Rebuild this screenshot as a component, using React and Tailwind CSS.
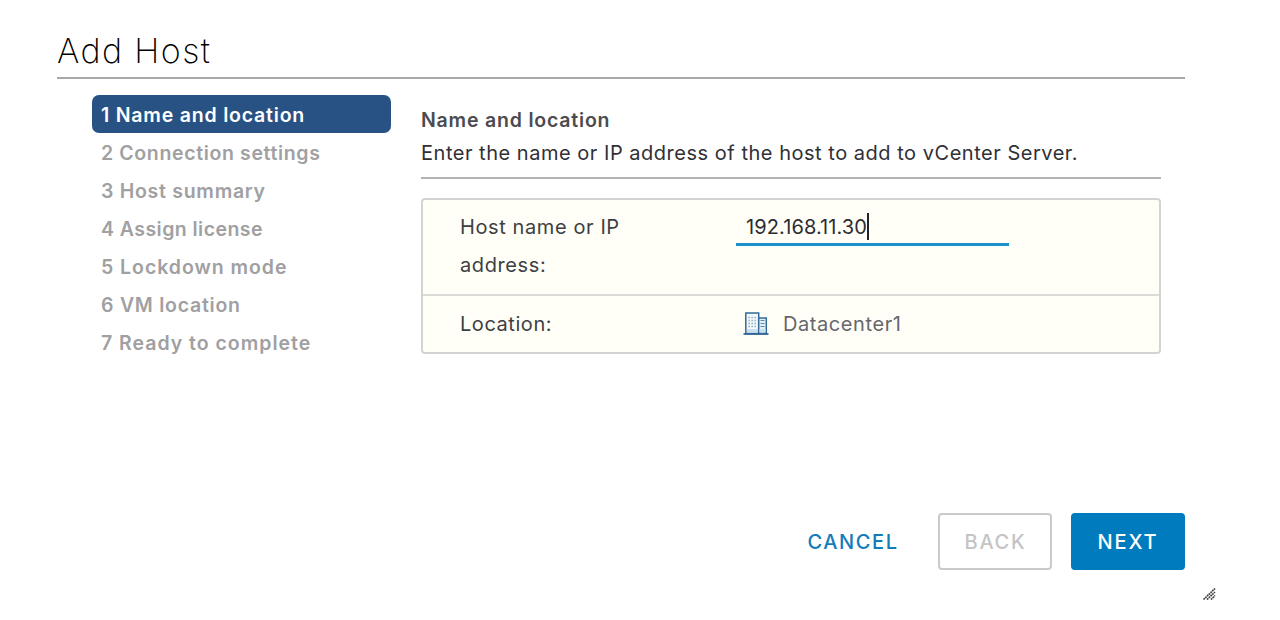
const STEPS = [
  { label: '1 Name and location', tracking: 'tracking-[0.8px]' },
  { label: '2 Connection settings', tracking: 'tracking-[0.64px]' },
  { label: '3 Host summary', tracking: 'tracking-[0.72px]' },
  { label: '4 Assign license', tracking: 'tracking-[0.45px]' },
  { label: '5 Lockdown mode', tracking: 'tracking-[0.95px]' },
  { label: '6 VM location', tracking: 'tracking-[0.75px]' },
  { label: '7 Ready to complete', tracking: 'tracking-[0.98px]' },
];

function DatacenterIcon() {
  return (
    <svg width="26" height="25" viewBox="0 0 26 25" className="shrink-0" fill="none">
      <rect x="2.8" y="1" width="12.9" height="20.5" fill="#f4f9fc" stroke="#336a96" strokeWidth="1.5" />
      <rect x="15.7" y="6" width="7.6" height="15.5" fill="#e3eff7" stroke="#336a96" strokeWidth="1.5" />
      <path d="M5.5 5.5h8M5.5 8.5h8M5.5 11.5h8M5.5 14.5h8" stroke="#7fa1b8" strokeWidth="1.3" strokeDasharray="1.3 1.7" />
      <path d="M17.5 8.5h4M17.5 11.5h4M17.5 14.5h4" stroke="#5e8db0" strokeWidth="1.2" />
      <path d="M4 18.5h11M16.5 18.5h6" stroke="#c9e0ee" strokeWidth="3" />
      <path d="M.5 22h25" stroke="#336a96" strokeWidth="1.8" />
    </svg>
  );
}

function ResizeGrip() {
  return (
    <svg width="13" height="12" viewBox="0 0 13 12" fill="none" stroke="#444" strokeWidth="1.7">
      <path d="M.5 11.5L12 .5M4 11.5L12 4M8 11.5L12 7.5" strokeDasharray="1.8 .6" />
    </svg>
  );
}

export default function App() {
  return (
    <main className="flex h-[620px] w-[1280px] flex-col overflow-hidden bg-white font-['Inter','Noto_Sans',sans-serif] text-[20px] whitespace-nowrap text-[#4b4b50]">
      <header className="mr-[95px] ml-[57px] flex h-[79px] items-end border-b-2 border-[#a8a8a8] pb-[6px]">
        <h1 className="text-[34px] leading-[40px] font-extralight tracking-[1.4px] text-black">Add Host</h1>
      </header>

      <div className="flex h-[434px] pt-[16px] pl-[92px]">
        <ol className="w-[299px] shrink-0 text-[19.5px] font-semibold text-[#a0a0a2]">
          {STEPS.map((step, i) => (
            <li
              key={step.label}
              className={`flex h-[38px] items-center rounded-[7px] pt-[3px] pl-[9px] ${i === 0 ? 'bg-[#285283] text-white' : ''}`}
            >
              <span className={step.tracking}>{step.label}</span>
            </li>
          ))}
        </ol>

        <section className="ml-[30px] w-[740px]">
          <h2 className="mt-[10px] text-[19.5px] leading-[30px] font-semibold tracking-[0.8px]">Name and location</h2>
          <p className="flex h-[44px] items-center border-b-2 border-[#b3b1b3] pb-[7px] text-[#303036]">
            <span className="tracking-[0.52px]">Enter the name or IP address of the host to add to vCenter Server.</span>
          </p>
          <div className="mt-[19px] rounded-[4px] border-2 border-[#d3d3d1] bg-[#fffff8]">
            <div className="flex h-[96px] border-b-2 border-[#dadad7] pt-[8px] pl-[37px]">
              <label htmlFor="host" className="w-[276px] leading-[38px] tracking-[0.6px] text-[#3e3e43]">
                <span>Host name or IP</span>
                <br />
                <span>address:</span>
              </label>
              <div id="host" className="flex h-[38px] w-[273px] items-center border-b-[3px] border-[#1b90cb] pt-[2px] pl-[10px] text-[#2c2c33]">
                <span className="tracking-[0.1px]">192.168.11.30</span>
                <span className="h-[27px] w-[2px] bg-[#222]" />
              </div>
            </div>
            <div className="flex h-[56px] items-center pl-[37px]">
              <span className="w-[283px] tracking-[0.55px] text-[#3e3e43]">Location:</span>
              <DatacenterIcon />
              <span className="ml-[14px] tracking-[0.58px] text-[#66666c]">Datacenter1</span>
            </div>
          </div>
        </section>
      </div>

      <footer className="flex h-[57px] justify-end pr-[95px] font-medium">
        <button className="mr-[20px] w-[131px] pl-px text-[#137bb9]"><span className="tracking-[1.6px]">CANCEL</span></button>
        <button className="mr-[19px] w-[114px] rounded-[4px] border-2 border-[#cacaca] pl-px text-[#c4c4c5]"><span className="tracking-[1.7px]">BACK</span></button>
        <button className="w-[114px] rounded-[4px] bg-[#007bbd] text-white"><span className="tracking-[1.9px]">NEXT</span></button>
      </footer>
      <div className="mt-[18px] flex justify-end pr-[64px]">
        <ResizeGrip />
      </div>
    </main>
  );
}
